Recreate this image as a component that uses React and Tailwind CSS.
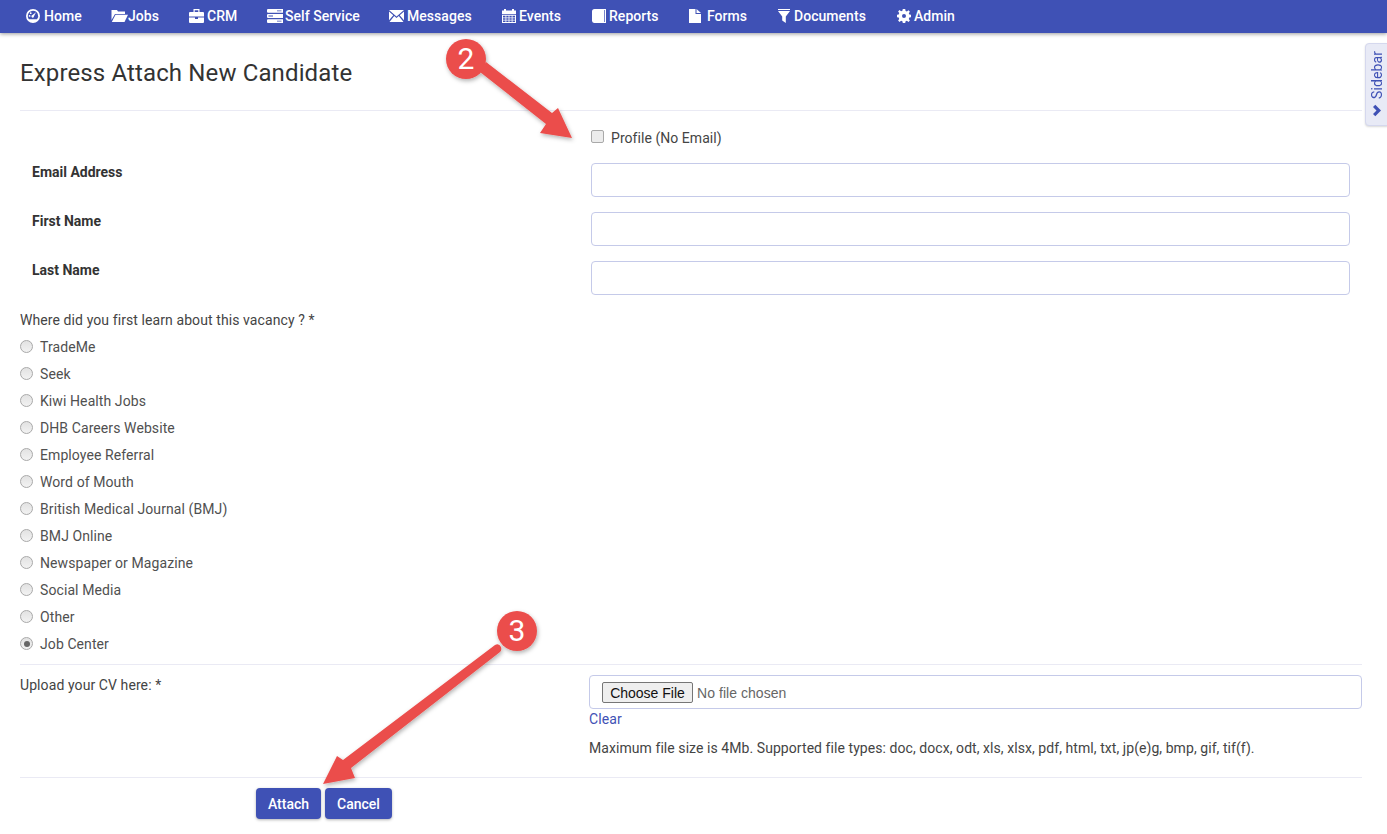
const Ico = ({ w = 14, children }) => (
  <svg width={w} height="14" viewBox={`0 0 ${w} 14`} fill="#fff" className="shrink-0">{children}</svg>
);

const nav = [
  { label: "Home", w: 85, gap: "gap-[4px]", icon: (
    <Ico><path fillRule="evenodd" d="M7 0a7 7 0 1 1 0 14A7 7 0 0 1 7 0Zm0 1.800A5.200 5.200 0 0 0 1.800 7c0 1.300.5 2.500 1.200 3.300h8A5.200 5.200 0 0 0 7 1.800Z" /><path d="M10 3.200 8 7.300a1.300 1.300 0 1 1-1.500-1.200L10 3.200ZM3.600 6a.9.900 0 1 1 0 1.800.9.900 0 0 1 0-1.800Zm1.100-2.700a.9.900 0 1 1 0 1.800.9.900 0 0 1 0-1.800Z" /></Ico>
  ) },
  { label: "Jobs", w: 78, gap: "gap-0", icon: (
    <Ico w={17}><path d="M.5 1h5.500l1 1.500h7V5H4L.5 11V1Z" /><path d="M4.500 5.800H17L13.500 13H.8L4.500 5.800Z" /></Ico>
  ) },
  { label: "CRM", w: 78, gap: "gap-[3px]", icon: (
    <Ico w={15}><path fillRule="evenodd" d="M4.500 0h6v3H14a1 1 0 0 1 1 1v3.500H0V4a1 1 0 0 1 1-1h3.500V0Zm1.200 1.200V3h3.600V1.200H5.700Z" /><path d="M0 8.500h6V10h3V8.500h6V13a1 1 0 0 1-1 1H1a1 1 0 0 1-1-1V8.500Z" /></Ico>
  ) },
  { label: "Self Service", w: 122, gap: "gap-[2px]", icon: (
    <Ico w={16}><path d="M1 0h15v3.800H1a1.500 1.500 0 0 1-1-1.900A1.500 1.500 0 0 1 1 0ZM1 5.100h15v3.800H1a1.500 1.500 0 0 1-1-1.900 1.500 1.500 0 0 1 1-1.900ZM1 10.200h15V14H1a1.500 1.500 0 0 1-1-1.900 1.500 1.500 0 0 1 1-1.900Z" /><path fill="#3f51b5" d="M10 1.500h4.500v.8H10zM1.500 6.600H6v.8H1.500zM10 11.700h4.500v.8H10z" /></Ico>
  ) },
  { label: "Messages", w: 113, gap: "gap-[3px]", icon: (
    <Ico w={15}><path d="M0 1h15L7.500 7.500 0 1Zm0 1.500 4.300 3.700L0 11.200V2.500Zm15 0v8.700l-4.300-5 4.300-3.700ZM5.200 7l2.300 2 2.300-2 4.700 6H.5l4.700-6Z" /></Ico>
  ) },
  { label: "Events", w: 90, gap: "gap-[3px]", icon: (
    <Ico><path d="M2 0h2v1.500h6V0h2v1.500h2V5H0V1.500h2V0Z" /><path fillRule="evenodd" d="M0 5.800h14V14H0V5.800Zm1 1v1.600h2.500V6.800H1Zm3.300 0v1.600h2.300V6.800H4.300Zm3.100 0v1.600h2.300V6.800H7.400Zm3.100 0v1.600H13V6.800h-2.500ZM1 9.200v1.500h2.500V9.200H1Zm3.300 0v1.500h2.300V9.200H4.300Zm3.100 0v1.500h2.300V9.200H7.400Zm3.100 0v1.500H13V9.200h-2.500ZM1 11.500V13h2.500v-1.500H1Zm3.300 0V13h2.300v-1.500H4.300Zm3.100 0V13h2.300v-1.500H7.400Zm3.100 0V13H13v-1.500h-2.500Z" /></Ico>
  ) },
  { label: "Reports", w: 97, gap: "gap-[3px]", icon: (
    <Ico><path d="M2.500 0H14v14H2.500A2.500 2.500 0 0 1 0 12V2.500A2.500 2.500 0 0 1 2.500 0Z" /><path fill="#3f51b5" d="M12 1h.7v12H12z" /></Ico>
  ) },
  { label: "Forms", w: 89, gap: "gap-[6px]", icon: (
    <Ico w={12}><path d="M0 0h6.500v5H12v9H0V0Zm7.500 0L12 4H7.500V0Z" /></Ico>
  ) },
  { label: "Documents", w: 119, gap: "gap-[4px]", icon: (
    <Ico w={12}><path d="M0 0h12v1H0zM0 2h12L7.800 7.500V14L4.200 11.500v-4L0 2Z" /></Ico>
  ) },
  { label: "Admin", w: 70, gap: "gap-[3px]", icon: (
    <Ico><path fillRule="evenodd" d="M5.800 0h2.400l.4 1.900 1.300.5 1.600-1.100 1.400 1.400-1.100 1.600.5 1.300L14 5.800v2.400l-1.700.4-.5 1.300 1.100 1.600-1.400 1.400-1.600-1.100-1.300.5-.4 1.700H5.800l-.4-1.700-1.300-.5-1.600 1.100-1.400-1.400 1.100-1.600-.5-1.300L0 8.200V5.800l1.700-.4.5-1.300-1.100-1.600 1.400-1.400 1.600 1.100 1.300-.5L5.800 0ZM7 5a2 2 0 1 0 0 4 2 2 0 0 0 0-4Z" /></Ico>
  ) },
];

const sources = [
  "TradeMe", "Seek", "Kiwi Health Jobs", "DHB Careers Website", "Employee Referral", "Word of Mouth",
  "British Medical Journal (BMJ)", "BMJ Online", "Newspaper or Magazine", "Social Media", "Other", "Job Center",
];

const Radio = ({ checked }) => (
  <span className="w-[13px] h-[13px] rounded-full border border-[#a9a9a9] bg-[linear-gradient(#e2e2e2,#f2f2f2)] flex items-center justify-center shrink-0">
    {checked && <span className="w-[6px] h-[6px] rounded-full bg-[#666]" />}
  </span>
);

const Field = ({ label }) => (
  <div className="flex h-[34px] mb-[15px] pl-3">
    <div className="w-[559px] font-bold text-[#333] text-sm leading-[18px] tracking-normal">{label}</div>
    <div className="w-[759px] h-[34px] border border-[#c5cae9] rounded bg-white" />
  </div>
);

export default function App() {
  return (
    <div className="relative w-[1387px] h-[834px] overflow-hidden bg-white font-['Roboto',sans-serif] text-sm text-[#444] tracking-[0.09px]">
      <nav className="h-[33px] pb-[2px] bg-[#3f51b5] shadow-[0_1px_4px_rgba(0,0,0,0.4)] flex items-center pl-[26px] text-white font-medium text-sm tracking-[0.04px]">
        {nav.map((n) => (
          <div key={n.label} className={`flex items-center shrink-0 ${n.gap}`} style={{ width: n.w }}>
            {n.icon}
            <span>{n.label}</span>
          </div>
        ))}
      </nav>

      <main className="pl-5 pr-[25px]">
        <h1 className="text-2xl leading-[28px] text-[#333] pt-[26px] pb-[23px] border-b border-[#eaeaf4] tracking-[0.13px]">Express Attach New Candidate</h1>

        <div className="flex items-center gap-[7px] pl-[571px] h-[27px] mt-[13px] mb-[12px]">
          <span className="w-[13px] h-[13px] rounded-[2px] border border-[#a9a9a9] bg-[#ececec] -mt-[3px]" />
          <span className="tracking-[0.05px]">Profile (No Email)</span>
        </div>

        <Field label="Email Address" />
        <Field label="First Name" />
        <Field label="Last Name" />

        <div className="leading-[18px] mt-[16px] mb-[4px] text-[#444]">Where did you first learn about this vacancy ? *</div>
        <div className="flex flex-col">
          {sources.map((s, i) => (
            <label key={s} className="flex items-center gap-[7px] h-[27px]">
              <Radio checked={i === sources.length - 1} />
              <span className="text-[#505050]">{s}</span>
            </label>
          ))}
        </div>

        <div className="flex border-t border-[#eaeaf4] mt-[7px] pt-[10px] h-[113px]">
          <div className="w-[569px] leading-[20px]">Upload your CV here: *</div>
          <div className="flex-1">
            <div className="h-[34px] border border-[#c5cae9] rounded flex items-center pl-3 pt-[1px] gap-1 tracking-normal">
              <span className="h-[21px] w-[91px] border border-[#767676] rounded-[2px] bg-[#efefef] text-[#111] font-['Liberation_Sans',sans-serif] text-[14px] flex items-center justify-center">Choose File</span>
              <span className="text-[#666] font-['Liberation_Sans',sans-serif] text-[14px] tracking-[0.05px]">No file chosen</span>
            </div>
            <a className="block text-[#3f51b5] leading-[20px]">Clear</a>
            <p className="mt-[9px] leading-[20px] text-[#444] tracking-[0.065px]">Maximum file size is 4Mb. Supported file types: doc, docx, odt, xls, xlsx, pdf, html, txt, jp(e)g, bmp, gif, tif(f).</p>
          </div>
        </div>

        <div className="border-t border-[#eaeaf4] pt-[10px] pl-[236px] flex gap-1 tracking-normal">
          <button className="h-[31px] w-[65px] rounded bg-[#3f51b5] text-white font-medium shadow-[0_1px_3px_rgba(0,0,0,0.3)]">Attach</button>
          <button className="h-[31px] w-[67px] rounded bg-[#3f51b5] text-white font-medium shadow-[0_1px_3px_rgba(0,0,0,0.3)]">Cancel</button>
        </div>
      </main>

      <div className="absolute left-[1365px] top-[43px] w-[23px] h-[83px] bg-[#e8eaf6] border border-[#d5d8ee] rounded-l flex flex-col items-center justify-end pb-[8px] shadow-[0_1px_2px_rgba(0,0,0,0.15)]">
        <span className="text-[#3f51b5] text-sm [writing-mode:vertical-rl] rotate-180 leading-[22px] mb-[5px] tracking-[0.1px]">Sidebar</span>
        <svg width="10" height="13" viewBox="0 0 10 13" fill="#3f51b5"><path d="M1 3 3.300.8 9 6.500l-5.700 5.700L1 10l3.500-3.500L1 3Z" /></svg>
      </div>

      <svg className="absolute left-0 top-0 pointer-events-none" width="1387" height="834" viewBox="0 0 1387 834">
        <defs>
          <filter id="s" x="-20%" y="-20%" width="140%" height="140%">
            <feDropShadow dx="1" dy="2" stdDeviation="2" floodColor="#000" floodOpacity="0.3" />
          </filter>
        </defs>
        <g filter="url(#s)" fill="#eb4d4b">
          <path d="M486 62 L552 113 L558 108 L572 138 L540 133 L546 124 L480 72 Z" />
          <circle cx="466" cy="59" r="20" />
          <path d="M495 645 Q499 643 501 647 Q502 650 500 652 L351 768 L355 778 L323 784 L337 756 L343 760 Z" />
          <circle cx="517" cy="631" r="20" />
        </g>
      </svg>
      <span className="absolute left-[446px] top-[39px] w-[40px] text-center text-[30px] leading-[40px] text-white">2</span>
      <span className="absolute left-[497px] top-[611px] w-[40px] text-center text-[30px] leading-[40px] text-white">3</span>
    </div>
  );
}
